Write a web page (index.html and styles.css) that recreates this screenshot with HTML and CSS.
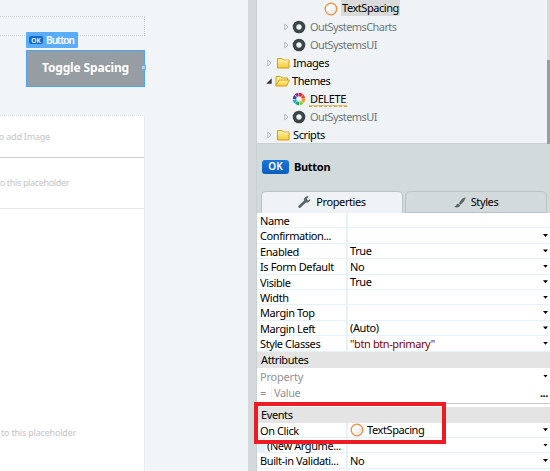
FILE: index.html
```html
<!DOCTYPE html>
<html lang="en">
<head>
<meta charset="utf-8">
<title>Toggle Spacing</title>
<link rel="stylesheet" href="styles.css">
</head>
<body>
<svg width="0" height="0" class="defs" aria-hidden="true">
  <defs>
    <linearGradient id="fold" x1="0" y1="0" x2="0" y2="1"><stop offset="0" stop-color="#fdf2a0"/><stop offset="1" stop-color="#f8cb3c"/></linearGradient>
    <linearGradient id="ball" x1="0" y1="0" x2="1" y2="1"><stop offset="0.3" stop-color="#fff"/><stop offset="1" stop-color="#dcdcdc"/></linearGradient>
  </defs>
  <symbol id="ring" viewBox="0 0 14 14"><circle cx="7" cy="7" r="5.8" fill="url(#ball)" stroke="#ed8b3e" stroke-width="1.3"/></symbol>
  <symbol id="module" viewBox="0 0 14 14"><circle cx="7" cy="7" r="6.3" fill="#3b4547"/><circle cx="7" cy="7" r="2.7" fill="#eff3f5"/></symbol>
  <symbol id="closed" viewBox="0 0 14 12"><path d="M1 11V1.5h4.5L7 3h5.5v8z" fill="url(#fold)" stroke="#d69c14"/><path d="M1.5 4h10.5" stroke="#fff3a8"/></symbol>
  <symbol id="open" viewBox="0 0 15 12"><path d="M1 11V1.5h4.5L7 3h5.5v2" fill="#fdf09a" stroke="#d69c14"/><path d="M1 11L4 5h10.3l-2.8 6z" fill="url(#fold)" stroke="#d69c14"/></symbol>
  <symbol id="arrow" viewBox="0 0 5 8"><path d="M.8 1v6l3.2-3z" fill="none" stroke="#b0b4b6" stroke-width=".9"/></symbol>
  <symbol id="expanded" viewBox="0 0 6 6"><path d="M5.7.3v5.4H.3z" fill="#333"/></symbol>
</svg>
<div class="app">
  <section class="canvas">
    <div class="strip"></div>
    <div class="widget">
      <div class="tag"><span class="ok ok-small">OK</span><span class="tag-text">Button</span></div>
      <div class="button"><span>Toggle Spacing</span></div>
      <i class="handle"></i>
    </div>
    <div class="card">
      <div class="slot slot-image"><span>o add Image</span></div>
      <div class="slot slot-title"><span>o this placeholder</span></div>
      <div class="slot slot-body"><span>to this placeholder</span></div>
    </div>
  </section>
  <div class="divider"></div>
  <aside class="panel">
    <div class="tree-wrap">
      <div class="tree">
        <div class="node l3"><svg class="icon"><use href="#ring"/></svg><span class="selected">TextSpacing</span></div>
        <div class="node l2 dim"><svg class="arrow"><use href="#arrow"/></svg><svg class="icon"><use href="#module"/></svg><span>OutSystemsCharts</span></div>
        <div class="node l2 dim"><svg class="arrow"><use href="#arrow"/></svg><svg class="icon"><use href="#module"/></svg><span>OutSystemsUI</span></div>
        <div class="node l1"><svg class="arrow"><use href="#arrow"/></svg><svg class="folder"><use href="#closed"/></svg><span>Images</span></div>
        <div class="node l1"><svg class="arrow down"><use href="#expanded"/></svg><svg class="folder"><use href="#open"/></svg><span>Themes</span></div>
        <div class="node l2"><i class="arrow"></i><svg class="icon" viewBox="0 0 14 14">
          <g fill="none" stroke-width="3.4" stroke-dasharray="3 25.3">
            <circle cx="7" cy="7" r="4.5" stroke="#f59a23"/>
            <circle cx="7" cy="7" r="4.5" stroke="#8cc63f" transform="rotate(45 7 7)"/>
            <circle cx="7" cy="7" r="4.5" stroke="#18a661" transform="rotate(90 7 7)"/>
            <circle cx="7" cy="7" r="4.5" stroke="#20a8d8" transform="rotate(135 7 7)"/>
            <circle cx="7" cy="7" r="4.5" stroke="#354fa8" transform="rotate(180 7 7)"/>
            <circle cx="7" cy="7" r="4.5" stroke="#a32c94" transform="rotate(225 7 7)"/>
            <circle cx="7" cy="7" r="4.5" stroke="#e5252a" transform="rotate(270 7 7)"/>
            <circle cx="7" cy="7" r="4.5" stroke="#e84d25" transform="rotate(315 7 7)"/>
          </g></svg><span class="warn">DELETE</span></div>
        <div class="node l2 dim"><svg class="arrow"><use href="#arrow"/></svg><svg class="icon"><use href="#module"/></svg><span>OutSystemsUI</span></div>
        <div class="node l1"><svg class="arrow"><use href="#arrow"/></svg><svg class="folder"><use href="#closed"/></svg><span>Scripts</span></div>
      </div>
      <div class="scroll"><i></i></div>
    </div>
    <div class="heading"><span class="ok">OK</span><b>Button</b></div>
    <div class="tabs">
      <div class="tab active"><svg width="13" height="12" viewBox="0 0 13 12"><path d="M1.7 10.5L7.4 5.3" stroke="#59676a" stroke-width="2.8" stroke-linecap="round"/><path d="M10.7.6A3.5 3.5 0 0 0 6 4.7 3.4 3.4 0 0 0 12.4 3L10 4.4 8.8 3z" fill="#59676a"/></svg><span>Properties</span></div>
      <div class="tab"><svg width="12" height="11" viewBox="0 0 12 11"><path d="M11.7.2C8 1.2 6 4 5 6.3l1.7 1.4C9 5.5 11 3.4 11.7.2z" fill="#59676a"/><path d="M4.4 6.8C2.5 6.5 2.8 9 .2 9.7 2.5 11.2 6 10.5 6.1 8.1z" fill="#59676a"/></svg><span>Styles</span></div>
    </div>
    <div class="grid">
      <div class="row"><span class="key">Name</span><span class="val"></span></div>
      <div class="row"><span class="key">Confirmation...</span><span class="val"></span><i class="drop"></i></div>
      <div class="row"><span class="key">Enabled</span><span class="val">True</span><i class="drop"></i></div>
      <div class="row"><span class="key">Is Form Default</span><span class="val">No</span><i class="drop"></i></div>
      <div class="row"><span class="key">Visible</span><span class="val">True</span><i class="drop"></i></div>
      <div class="row"><span class="key">Width</span><span class="val"></span><i class="drop"></i></div>
      <div class="row"><span class="key">Margin Top</span><span class="val"></span><i class="drop"></i></div>
      <div class="row"><span class="key">Margin Left</span><span class="val">(Auto)</span><i class="drop"></i></div>
      <div class="row"><span class="key">Style Classes</span><span class="val text">"btn btn-primary"</span><i class="drop"></i></div>
    </div>
    <div class="band">Attributes</div>
    <div class="attrs">
      <div class="attr"><span class="attr-key">Property</span><i class="drop"></i></div>
      <div class="attr attr-value"><span class="eq">=</span><span class="attr-val">Value</span><b class="more">...</b></div>
    </div>
    <div class="band">Events</div>
    <div class="grid">
      <div class="row"><span class="key">On Click</span><span class="val action"><svg class="icon"><use href="#ring"/></svg>TextSpacing</span><i class="drop"></i></div>
      <div class="row sub"><span class="key">(New Argume...</span><span class="val"></span><i class="drop"></i></div>
      <div class="row"><span class="key">Built-in Validati...</span><span class="val">No</span><i class="drop"></i></div>
      <div class="row"><span class="key"></span><span class="val"></span></div>
    </div>
  </aside>
  <div class="highlight"></div>
</div>
</body>
</html>
```
FILE: styles.css
```css
* { box-sizing: border-box; }
body { margin: 0; font: 11px/15px "Noto Sans", "Open Sans", sans-serif; letter-spacing: -.4px; color: #000; }
.defs { position: absolute; }
.app { position: relative; display: flex; width: 550px; height: 471px; overflow: hidden; background: #f1f5f8; }
svg { display: block; flex: none; }

.canvas { width: 248px; padding-top: 16px; }
.strip { width: 145px; height: 20px; border: 1px dotted #cfd2d4; border-left: 0; }
.widget { position: relative; width: 119px; height: 37px; margin: 14px 0 28px 26px; }
.tag { position: absolute; left: 0; top: -18px; width: 52px; height: 16px; display: flex; align-items: center; padding-left: 3px; background: #5aacff; border-radius: 1px; color: #fff; }
.tag-text { margin-left: 3px; font-size: 10px; font-weight: 600; letter-spacing: -.95px; }
.ok { display: flex; align-items: center; justify-content: center; width: 27px; height: 14px; border-radius: 3px; background: linear-gradient(#1b78d8, #0a5cbc); color: #fff; font-size: 10px; font-weight: 600; letter-spacing: 0; }
.ok-small { width: 14px; height: 8px; border-radius: 2px; font-size: 6.5px; background: #126bca; }
.button { display: flex; height: 37px; align-items: center; justify-content: center; border: 1px solid #4da3f7; background: #969da3; color: #fff; font-size: 12px; font-weight: 700; letter-spacing: -.15px; }
.button span { position: relative; top: -1px; }
.handle { position: absolute; right: -1px; top: 15px; width: 5px; height: 5px; border: 1px solid #5aacff; background: #b5d7dc; }
.card { width: 145px; height: 370px; border: 1px dotted #d3d8dc; border-left: 0; border-radius: 0 3px 0 0; background: #fff; color: #c3c5c8; font-size: 9px; }
.slot { display: flex; align-items: center; justify-content: flex-end; }
.slot span { white-space: nowrap; letter-spacing: -.2px; }
.slot-image { height: 41px; padding-right: 94px; }
.slot-title { height: 51px; padding: 0 75px 2px 0; border-top: 1px solid #ccc; }
.slot.slot-title span { letter-spacing: -.35px; }
.slot-body { height: 276px; padding: 216px 68px 0 0; align-items: flex-start; border-top: 1px solid #e3e5e7; }

.divider { width: 9px; background: #d2dadc; border-right: 1px solid #c8d1d3; }
.panel { width: 293px; background: #fff; }
.tree-wrap { display: flex; height: 144px; background: #eff3f5; border-bottom: 1px solid #c9d1d3; }
.tree { flex: 1; }
.node { display: flex; align-items: center; height: 18px; }
.l1 { padding-left: 10px; }
.l2 { padding-left: 27px; }
.l3 { padding-left: 67px; }
.dim { color: #70767a; }
.dim span { letter-spacing: -.58px; }
.arrow { width: 5px; height: 8px; margin-right: 4px; }
.down { width: 6px; height: 6px; margin: 0 3px 0 -1px; }
.icon { width: 14px; height: 14px; margin-right: 3px; }
.node .icon { margin: 0 3px 0 -1px; }
.node.l3 .icon { margin: 0 3px 0 0; }
.folder { width: 15px; height: 12px; margin: 0 2px 0 0; }
.node span { padding: 0 1px; margin-top: -2px; }
.node .folder + span { margin-left: -1px; }
.node .selected { height: 16px; margin-top: -2px; background: #dadada; letter-spacing: -.45px; }
.node .warn { height: 15px; border-bottom: 1px dashed #d6aa45; background: linear-gradient(#e2c078, #e2c078) bottom / 100% 1px no-repeat; margin-top: 0; line-height: 13px; }
.scroll { width: 3px; background: #d2dadb; padding-top: 60px; }
.scroll i { display: block; height: 84px; background: #929fa3; }

.heading { display: flex; align-items: center; height: 47px; padding-left: 5px; background: #d2dadb; }
.heading b { margin: -2px 0 0 5px; letter-spacing: -.3px; }
.heading .ok { margin-top: -2px; }
.tabs { display: flex; height: 22px; padding-left: 4px; gap: 2px; background: #d2dadb; }
.tab { display: flex; align-items: center; justify-content: center; width: 142px; height: 22px; border: 1px solid #bac3c5; border-radius: 5px 5px 0 0; }
.tab.active { background: #eff3f5; border-bottom-color: #eff3f5; }
.tab svg { margin-right: 5px; }
.tab span { margin-top: -1px; }

.row { display: flex; height: 15.4px; border-bottom: 1px solid #e4f2f9; align-items: center; }
.key { width: 91px; height: 100%; padding-left: 3px; border-right: 2px solid #e4f2f9; white-space: nowrap; }
.val { flex: 1; padding-left: 2px; white-space: nowrap; }
.text { color: #7d0000; }
.drop { width: 5px; height: 3px; margin-right: 2px; background: #000; clip-path: polygon(0 0, 100% 0, 50% 100%); }
.band { height: 16px; padding-left: 4px; background: #e4e4e4; }
.attrs { height: 36px; border-bottom: 1px solid #c9c9c9; color: #929292; margin-bottom: 3px; }
.attr { display: flex; align-items: center; height: 17px; }
.attr-key { flex: 1; padding-left: 3px; letter-spacing: -.2px; }
.eq { width: 10px; padding-left: 3px; }
.attr-value { height: 15px; }
.attr-val { flex: 1; margin-left: 4px; padding-left: 2px; border-left: 1px solid #e4f2f9; }
.more { margin-right: 2px; color: #000; }
.action { display: flex; align-items: center; }
.sub .key { padding-left: 2px; border-left: 8px solid #e4f2f9; }
.highlight { position: absolute; left: 254px; top: 402px; width: 192px; height: 42px; border: 4px solid #ed1b24; }
```
